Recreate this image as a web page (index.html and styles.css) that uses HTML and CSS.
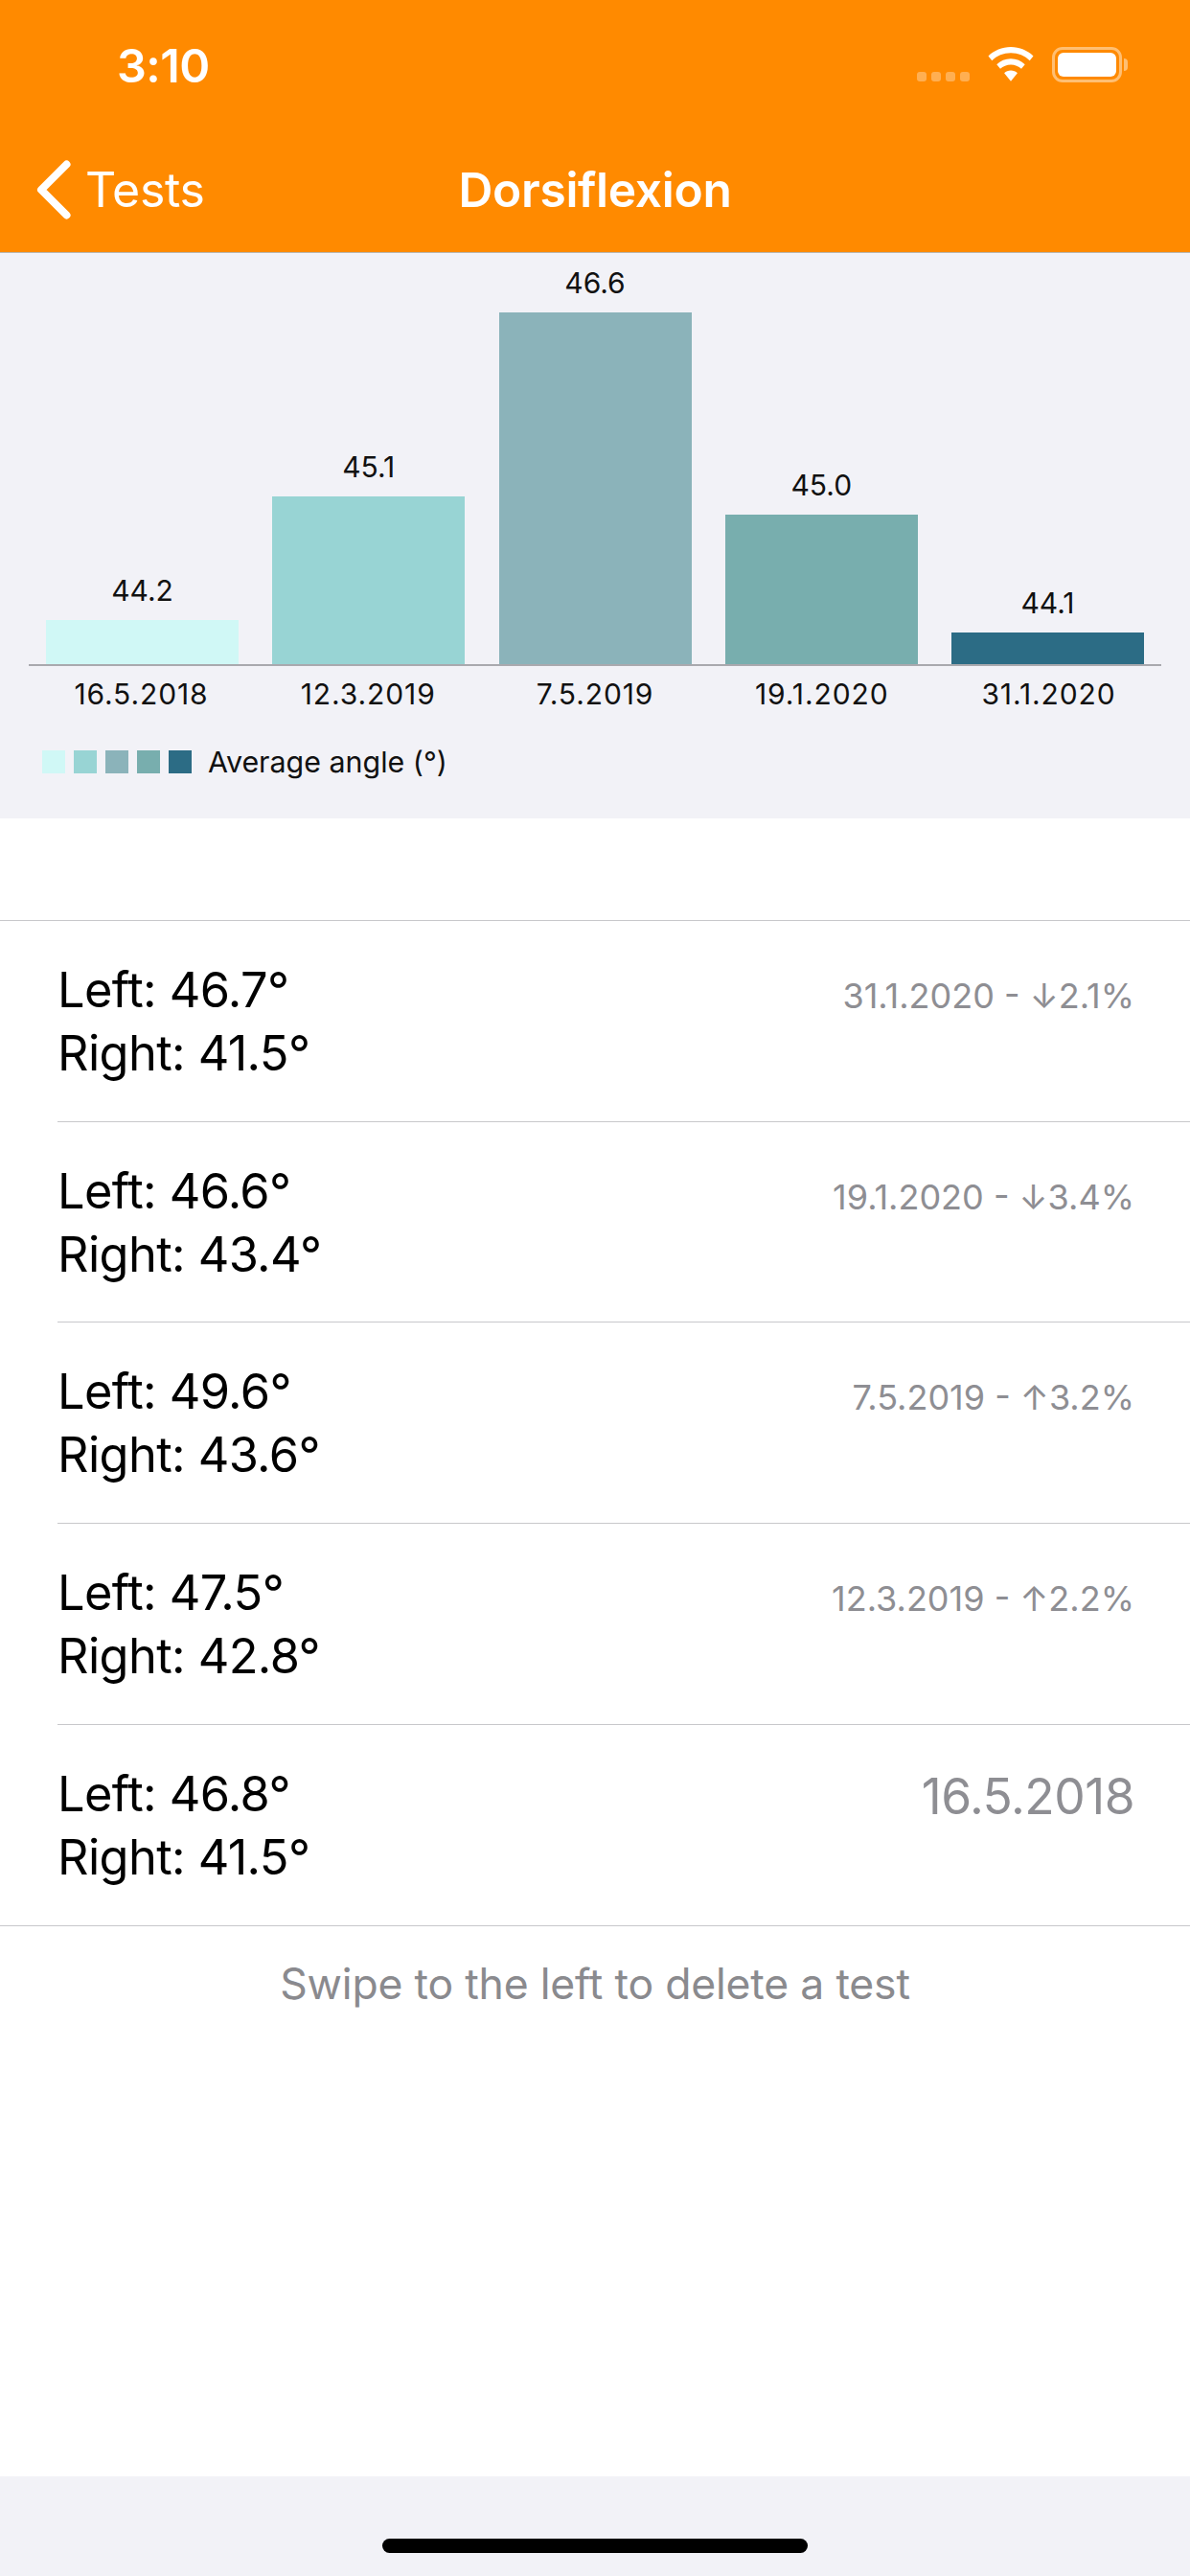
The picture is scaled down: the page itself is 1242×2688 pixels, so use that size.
FILE: index.html
```html
<!DOCTYPE html>
<html lang="en">
<head>
<meta charset="utf-8">
<title>Dorsiflexion</title>
<link rel="stylesheet" href="styles.css">
</head>
<body>
<div class="app">
  <header class="header">
    <div class="status">
      <span class="time">3:10</span>
      <div class="status-icons">
        <div class="signal"><i></i><i></i><i></i><i></i></div>
        <svg class="wifi" width="48" height="36" viewBox="0 0 48 36"><path d="M24 0C14.800 0 6.500 3.600 0.500 9.400L4.300 14.200C9.400 9.300 16.300 6.300 24 6.300C31.700 6.300 38.600 9.300 43.700 14.200L47.500 9.400C41.500 3.600 33.200 0 24 0Z" fill="#fff"/><path d="M24 12.300C18.300 12.300 13.100 14.500 9.300 18.200L13 22.800C15.900 20.100 19.800 18.500 24 18.500C28.200 18.500 32.100 20.100 35 22.800L38.700 18.200C34.900 14.500 29.700 12.300 24 12.300Z" fill="#fff"/><path d="M24 24.500C21.300 24.500 18.900 25.500 17.100 27.200L24 35.800L30.900 27.200C29.100 25.500 26.700 24.500 24 24.500Z" fill="#fff"/></svg>
        <div class="battery"><div class="battery-fill"></div><div class="battery-cap"></div></div>
      </div>
    </div>
    <nav class="nav">
      <div class="back">
        <svg width="40" height="64" viewBox="0 0 40 64"><path d="M33.500 5.500L7 32L33.500 58.500" fill="none" stroke="#fff" stroke-width="8" stroke-linecap="round" stroke-linejoin="round"/></svg>
        <span>Tests</span>
      </div>
      <h1 class="title">Dorsiflexion</h1>
    </nav>
  </header>

  <section class="chart">
    <div class="plot">
      <div class="col"><span class="val">44.2</span><div class="bar c1" style="height:46px"></div></div>
      <div class="col"><span class="val">45.1</span><div class="bar c2" style="height:175px"></div></div>
      <div class="col"><span class="val">46.6</span><div class="bar c3" style="height:367px"></div></div>
      <div class="col"><span class="val">45.0</span><div class="bar c4" style="height:156px"></div></div>
      <div class="col"><span class="val">44.1</span><div class="bar c5" style="height:33px"></div></div>
    </div>
    <div class="labels">
      <span>16.5.2018</span><span>12.3.2019</span><span>7.5.2019</span><span>19.1.2020</span><span>31.1.2020</span>
    </div>
    <div class="legend">
      <i class="c1"></i><i class="c2"></i><i class="c3"></i><i class="c4"></i><i class="c5"></i>
      <span>Average angle (°)</span>
    </div>
  </section>

  <ul class="list">
    <li class="row"><div class="vals"><div>Left: 46.7°</div><div>Right: 41.5°</div></div><div class="date">31.1.2020 - ↓2.1%</div></li>
    <li class="row"><div class="vals"><div>Left: 46.6°</div><div>Right: 43.4°</div></div><div class="date">19.1.2020 - ↓3.4%</div></li>
    <li class="row"><div class="vals"><div>Left: 49.6°</div><div>Right: 43.6°</div></div><div class="date">7.5.2019 - ↑3.2%</div></li>
    <li class="row"><div class="vals"><div>Left: 47.5°</div><div>Right: 42.8°</div></div><div class="date">12.3.2019 - ↑2.2%</div></li>
    <li class="row"><div class="vals"><div>Left: 46.8°</div><div>Right: 41.5°</div></div><div class="date date-big">16.5.2018</div></li>
  </ul>

  <p class="hint">Swipe to the left to delete a test</p>

  <footer class="home"><div class="indicator"></div></footer>
</div>
</body>
</html>
```
FILE: styles.css
```css
* { box-sizing: border-box; }
html, body { margin: 0; padding: 0; background: #fff; }
body { font-family: Inter, "Liberation Sans", sans-serif; }

.app { width: 1242px; height: 2688px; display: flex; flex-direction: column; overflow: hidden; background: #fff; }

.header { height: 264px; flex: none; background: #ff8a00; color: #fff; border-bottom: 1px solid #b9b4ab; }
.status { height: 132px; display: flex; justify-content: space-between; align-items: flex-start; padding: 41px 71px 0 122px; }
.time { margin-top: 2px; font-size: 48.500px; font-weight: 600; line-height: 52px; letter-spacing: -0.5px; }
.status-icons { display: flex; align-items: flex-end; padding-top: 8px; }
.signal { display: flex; gap: 5px; margin: 0 19px 1px 0; }
.signal i { width: 10px; height: 10px; border-radius: 3px; background: rgba(255,255,255,.32); }
.wifi { margin: 0 19px 1px 0; display: block; }
.battery { position: relative; width: 73px; height: 37px; border: 3px solid rgba(255,255,255,.45); border-radius: 11px; padding: 3px; }
.battery-fill { width: 100%; height: 100%; background: #fff; border-radius: 6px; }
.battery-cap { position: absolute; right: -9px; top: 9px; width: 4px; height: 13px; background: rgba(255,255,255,.45); border-radius: 0 4px 4px 0; }

.nav { position: relative; height: 132px; display: flex; align-items: flex-start; padding: 34px 0 0 36px; }
.back { display: flex; align-items: center; font-size: 50px; line-height: 64px; gap: 13px; letter-spacing: -0.3px; }
.back svg { display: block; }
.title { position: absolute; left: 0; right: 0; top: 34px; margin: 0; text-align: center; font-size: 49.700px; line-height: 64px; font-weight: 600; letter-spacing: -0.3px; }

.chart { height: 590px; flex: none; background: #f2f2f7; padding-top: 0; }
.plot { height: 431px; margin: 0 30px; padding: 0 18px; display: flex; justify-content: space-between; align-items: flex-end; border-bottom: 2px solid #a9a9ae; }
.col { width: 201px; display: flex; flex-direction: column; align-items: center; }
.val { font-size: 30px; line-height: 36px; margin-bottom: 13px; color: #111; }
.bar { width: 100%; }
.c1 { background: #d0f8f6; }
.c2 { background: #98d4d4; }
.c3 { background: #8bb3ba; }
.c4 { background: #78aeae; }
.c5 { background: #2c6c85; }
.labels { margin: 0 47px; padding-top: 11px; display: flex; justify-content: space-between; }
.labels span { width: 201px; text-align: center; font-size: 30px; line-height: 36px; color: #111; letter-spacing: 0.9px; }
.legend { margin: 35px 0 0 44px; display: flex; align-items: center; gap: 9px; }
.legend i { width: 24px; height: 24px; }
.legend span { margin-left: 8px; font-size: 30.400px; line-height: 36px; color: #111; }

.list { list-style: none; margin: 106px 0 0; padding: 0; border-top: 1px solid #c8c8cb; border-bottom: 1px solid #c8c8cb; flex: none; }
.row { height: 209.700px; margin-left: 60px; padding: 0 58px 0 0; display: flex; justify-content: space-between; align-items: flex-start; border-bottom: 1px solid #c8c8cb; }
.row:last-child { border-bottom: 0; }
.vals { padding-top: 39px; font-size: 50.500px; line-height: 66px; color: #000; letter-spacing: -0.6px; }
.date { padding-top: 56px; font-size: 36px; line-height: 44px; color: #8e8e93; }
.date-big { padding-top: 44px; font-size: 51.500px; line-height: 60px; letter-spacing: -0.5px; }

.hint { margin: 32px 0 0; text-align: center; font-size: 44.500px; line-height: 56px; color: #8a8a8e; letter-spacing: -0.2px; }

.home { margin-top: auto; height: 104px; flex: none; background: #f2f2f7; display: flex; justify-content: center; padding-top: 65px; }
.indicator { width: 444px; height: 15px; background: #000; border-radius: 8px; }
```
